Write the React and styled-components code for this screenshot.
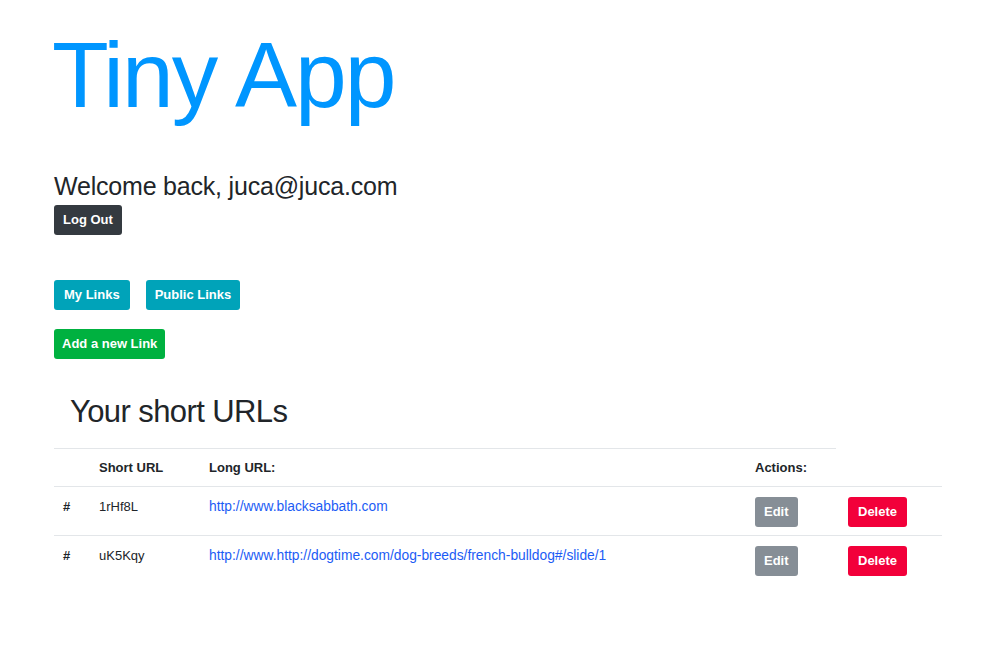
import React from 'react'
import styled, { createGlobalStyle } from 'styled-components'

const GlobalStyle = createGlobalStyle`
  html, body {
    margin: 0;
    padding: 0;
    background: #fff;
  }
  body {
    font-family: "Liberation Sans", Arial, sans-serif;
    color: #212529;
    -webkit-font-smoothing: antialiased;
  }
`

const Page = styled.div`
  padding: 20px 47px 60px 54px;
`

const Title = styled.h1`
  margin: 0 0 0 -2px;
  font-size: 93px;
  font-weight: 400;
  line-height: 1.2;
  letter-spacing: -2px;
  color: #0096ff;
`

const Welcome = styled.h3`
  margin: 39px 0 4px;
  font-size: 25px;
  font-weight: 400;
  line-height: 1.2;
  letter-spacing: -0.2px;
`

const colors = {
  dark: '#343a40',
  info: '#00a3b9',
  success: '#00b140',
  secondary: '#868e96',
  danger: '#f2003a',
}

const Button = styled.button`
  display: ${(p) => (p.$block ? 'block' : 'inline-block')};
  height: 30px;
  padding: 0 ${(p) => p.$pad || 9}px;
  border: none;
  border-radius: 3px;
  background: ${(p) => colors[p.$variant]};
  color: #fff;
  font-family: inherit;
  font-size: 13px;
  font-weight: 700;
  cursor: pointer;
`

const ButtonRow = styled.div`
  display: flex;
  gap: 16px;
  margin-top: ${(p) => p.$top}px;
`

const TableTitle = styled.h2`
  margin: 34px 0 0;
  padding: 0 16px 18px;
  font-size: 31px;
  font-weight: 400;
  line-height: 1.2;
  letter-spacing: -0.6px;
`

const Table = styled.table`
  width: 888px;
  border-collapse: collapse;
  table-layout: fixed;
  font-size: 13px;
`

const Th = styled.th`
  width: ${(p) => p.$w}px;
  padding: 11px 12px 11px ${(p) => (p.$first ? 9 : 12)}px;
  height: 38px;
  box-sizing: border-box;
  text-align: left;
  font-weight: 700;
  border-top: ${(p) => (p.$noTop ? 'none' : '1px solid #e3e6e9')};
  border-bottom: 1px solid #e3e6e9;
`

const Td = styled.td`
  padding: 10px 12px 8px ${(p) => (p.$first ? 9 : 12)}px;
  height: 48px;
  box-sizing: border-box;
  vertical-align: top;
  font-weight: ${(p) => (p.$bold ? 700 : 400)};
  line-height: 20px;
`

const Row = styled.tr`
  border-bottom: ${(p) => (p.$last ? 'none' : '1px solid #e3e6e9')};
`

const LinkText = styled.a`
  color: #1c5cf5;
  font-size: 13.8px;
  text-decoration: none;
`

const links = [
  { id: '1rHf8L', url: 'http://www.blacksabbath.com' },
  {
    id: 'uK5Kqy',
    url: 'http://www.http://dogtime.com/dog-breeds/french-bulldog#/slide/1',
  },
]

const App = () => (
  <>
    <GlobalStyle />
    <Page>
      <Title>Tiny App</Title>
      <Welcome>Welcome back, juca@juca.com</Welcome>
      <Button $variant="dark">Log Out</Button>
      <ButtonRow $top={45}>
        <Button $variant="info" $pad={10}>My Links</Button>
        <Button $variant="info" $pad={9}>Public Links</Button>
      </ButtonRow>
      <ButtonRow $top={19}>
        <Button $variant="success" $pad={8}>Add a new Link</Button>
      </ButtonRow>
      <TableTitle>Your short URLs</TableTitle>
      <Table>
        <thead>
          <tr>
            <Th $w={33} $first />
            <Th $w={110}>Short URL</Th>
            <Th $w={546}>Long URL:</Th>
            <Th $w={93}>Actions:</Th>
            <Th $w={106} $noTop />
          </tr>
        </thead>
        <tbody>
          {links.map((l, i) => (
            <Row key={l.id} $last={i === links.length - 1}>
              <Td $first $bold>#</Td>
              <Td>{l.id}</Td>
              <Td>
                <LinkText href="#">{l.url}</LinkText>
              </Td>
              <Td>
                <Button $variant="secondary" $block>Edit</Button>
              </Td>
              <Td>
                <Button $variant="danger" $block $pad={10}>Delete</Button>
              </Td>
            </Row>
          ))}
        </tbody>
      </Table>
    </Page>
  </>
)

export default App
